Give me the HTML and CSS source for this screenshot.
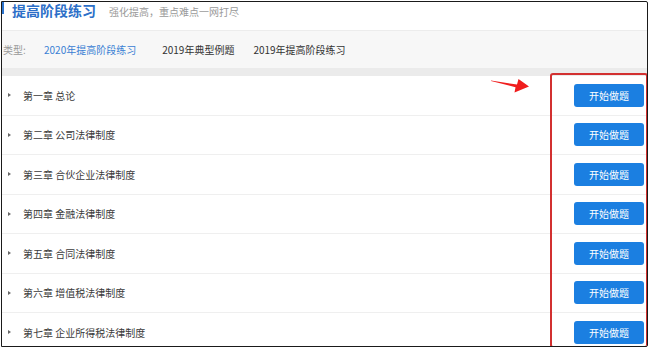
FILE: index.html
```html
<!DOCTYPE html>
<html lang="zh-CN">
<head>
    <meta charset="UTF-8">
    <meta name="viewport" content="width=device-width, initial-scale=1.0">
    <title>提高阶段练习</title>
    <link rel="stylesheet" href="styles.css">
</head>
<body>
    <div class="frame">
        <div class="head">
            <span class="head-bar"></span>
            <h1 class="head-title">提高阶段练习</h1>
            <span class="head-sub">强化提高，重点难点一网打尽</span>
        </div>
        <div class="filter">
            <span class="filter-label">类型:</span>
            <span class="filter-item active">2020年提高阶段练习</span>
            <span class="filter-item">2019年典型例题</span>
            <span class="filter-item">2019年提高阶段练习</span>
        </div>
        <div class="band"></div>
        <ul class="list">
            <li class="row"><span class="arrow-icon"></span><span class="row-name">第一章 总论</span><a class="btn">开始做题</a></li>
            <li class="row"><span class="arrow-icon"></span><span class="row-name">第二章 公司法律制度</span><a class="btn">开始做题</a></li>
            <li class="row"><span class="arrow-icon"></span><span class="row-name">第三章 合伙企业法律制度</span><a class="btn">开始做题</a></li>
            <li class="row"><span class="arrow-icon"></span><span class="row-name">第四章 金融法律制度</span><a class="btn">开始做题</a></li>
            <li class="row"><span class="arrow-icon"></span><span class="row-name">第五章 合同法律制度</span><a class="btn">开始做题</a></li>
            <li class="row"><span class="arrow-icon"></span><span class="row-name">第六章 增值税法律制度</span><a class="btn">开始做题</a></li>
            <li class="row"><span class="arrow-icon"></span><span class="row-name">第七章 企业所得税法律制度</span><a class="btn">开始做题</a></li>
        </ul>
        <!-- 标注：红框 + 箭头 -->
        <div class="mark-box"></div>
        <svg class="mark-arrow" width="44" height="18" viewBox="0 0 44 18">
            <polygon points="0,2.4 26,6.6 27.5,1 38,8.6 23.5,14.5 24.5,9.2 0,3" fill="#f01d1d"/>
        </svg>
    </div>
</body>
</html>
```

FILE: styles.css
```css
* {
    margin: 0;
    padding: 0;
    box-sizing: border-box;
}
body {
    background: #fff;
    font-family: "Noto Sans CJK SC", "Liberation Sans", sans-serif;
    font-size: 10px;
    color: #333;
}
.frame {
    position: relative;
    width: 647px;
    height: 346px;
    margin: 1px 0 0 1px;
    border: 1px solid #1a1a1a;
    border-radius: 0 2px 2px 0;
    overflow: hidden;
}
.head {
    height: 29px;
    display: flex;
    align-items: flex-start;
    border-bottom: 1px solid #ececec;
    position: relative;
}
.head-bar {
    position: absolute;
    left: 0;
    top: 0;
    width: 2px;
    height: 12px;
    background: #2c74cf;
}
.head-title {
    margin-left: 10px;
    font-size: 14px;
    line-height: 16px;
    font-weight: bold;
    color: #2c6fc8;
}
.head-sub {
    margin-left: 13px;
    margin-top: 4px;
    line-height: 12px;
    color: #9a9a9a;
}
.filter {
    height: 37px;
    background: #f7f7f7;
    display: flex;
    align-items: center;
    padding-left: 1px;
}
.filter-label {
    color: #999;
    width: 41px;
}
.filter-item {
    margin-right: 26px;
    color: #333;
}
.filter-item:nth-child(3) {
    margin-right: 19px;
}
.filter-item.active {
    color: #3a80d4;
}
.band {
    height: 8px;
    background: #ebebeb;
}
.list {
    list-style: none;
}
.row {
    height: 39.5px;
    display: flex;
    align-items: center;
    border-bottom: 1px solid #efefef;
    padding: 0 3px 0 6px;
}
.arrow-icon {
    width: 0;
    height: 0;
    border-left: 3px solid #666;
    border-top: 2.5px solid transparent;
    border-bottom: 2.5px solid transparent;
    margin-right: 12px;
}
.row-name {
    flex: 1;
    color: #3a3a3a;
}
.btn {
    width: 70px;
    height: 23px;
    line-height: 23px;
    text-align: center;
    color: #fff;
    background: #1b7fe1;
    border-radius: 3px;
}
.mark-box {
    position: absolute;
    left: 548px;
    top: 71px;
    width: 98px;
    height: 275px;
    border: 2px solid #d23030;
    border-radius: 3px;
}
.mark-arrow {
    position: absolute;
    left: 489px;
    top: 76px;
}
```
